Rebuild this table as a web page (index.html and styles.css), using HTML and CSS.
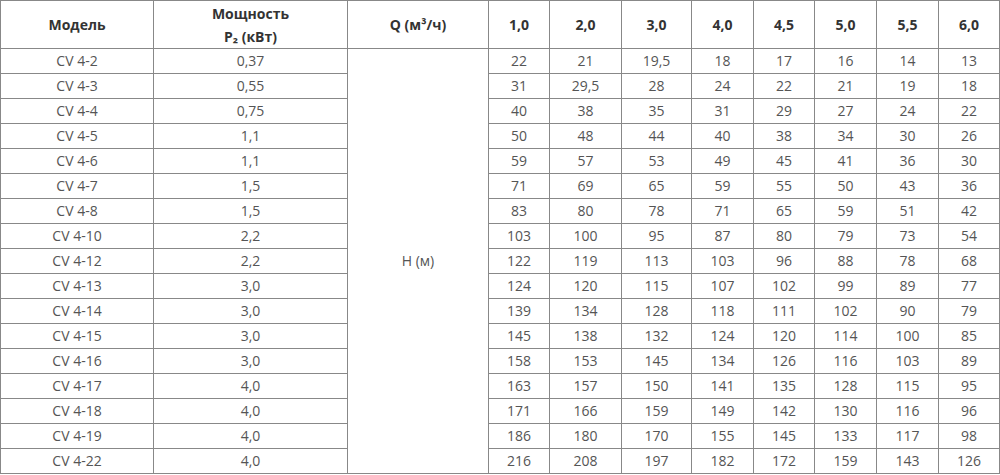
FILE: index.html
```html
<!DOCTYPE html>
<html lang="ru">
<head>
<meta charset="utf-8">
<title>CV 4</title>
<link rel="stylesheet" href="styles.css">
</head>
<body>
<table class="spec">
  <colgroup>
    <col class="w-model"><col class="w-power"><col class="w-q">
    <col class="w-a"><col class="w-b"><col class="w-c"><col class="w-d">
    <col class="w-e"><col class="w-f"><col class="w-g"><col class="w-h">
  </colgroup>
  <thead>
    <tr class="head">
      <th>Модель</th>
      <th>Мощность<br>P₂ (кВт)</th>
      <th>Q (м³/ч)</th>
      <th>1,0</th><th>2,0</th><th>3,0</th><th>4,0</th><th>4,5</th><th>5,0</th><th>5,5</th><th>6,0</th>
    </tr>
  </thead>
  <tbody>
    <tr><td>CV 4-2</td><td>0,37</td><td class="hcell" rowspan="17">H (м)</td><td>22</td><td>21</td><td>19,5</td><td>18</td><td>17</td><td>16</td><td>14</td><td>13</td></tr>
    <tr><td>CV 4-3</td><td>0,55</td><td>31</td><td>29,5</td><td>28</td><td>24</td><td>22</td><td>21</td><td>19</td><td>18</td></tr>
    <tr><td>CV 4-4</td><td>0,75</td><td>40</td><td>38</td><td>35</td><td>31</td><td>29</td><td>27</td><td>24</td><td>22</td></tr>
    <tr><td>CV 4-5</td><td>1,1</td><td>50</td><td>48</td><td>44</td><td>40</td><td>38</td><td>34</td><td>30</td><td>26</td></tr>
    <tr><td>CV 4-6</td><td>1,1</td><td>59</td><td>57</td><td>53</td><td>49</td><td>45</td><td>41</td><td>36</td><td>30</td></tr>
    <tr><td>CV 4-7</td><td>1,5</td><td>71</td><td>69</td><td>65</td><td>59</td><td>55</td><td>50</td><td>43</td><td>36</td></tr>
    <tr><td>CV 4-8</td><td>1,5</td><td>83</td><td>80</td><td>78</td><td>71</td><td>65</td><td>59</td><td>51</td><td>42</td></tr>
    <tr><td>CV 4-10</td><td>2,2</td><td>103</td><td>100</td><td>95</td><td>87</td><td>80</td><td>79</td><td>73</td><td>54</td></tr>
    <tr><td>CV 4-12</td><td>2,2</td><td>122</td><td>119</td><td>113</td><td>103</td><td>96</td><td>88</td><td>78</td><td>68</td></tr>
    <tr><td>CV 4-13</td><td>3,0</td><td>124</td><td>120</td><td>115</td><td>107</td><td>102</td><td>99</td><td>89</td><td>77</td></tr>
    <tr><td>CV 4-14</td><td>3,0</td><td>139</td><td>134</td><td>128</td><td>118</td><td>111</td><td>102</td><td>90</td><td>79</td></tr>
    <tr><td>CV 4-15</td><td>3,0</td><td>145</td><td>138</td><td>132</td><td>124</td><td>120</td><td>114</td><td>100</td><td>85</td></tr>
    <tr><td>CV 4-16</td><td>3,0</td><td>158</td><td>153</td><td>145</td><td>134</td><td>126</td><td>116</td><td>103</td><td>89</td></tr>
    <tr><td>CV 4-17</td><td>4,0</td><td>163</td><td>157</td><td>150</td><td>141</td><td>135</td><td>128</td><td>115</td><td>95</td></tr>
    <tr><td>CV 4-18</td><td>4,0</td><td>171</td><td>166</td><td>159</td><td>149</td><td>142</td><td>130</td><td>116</td><td>96</td></tr>
    <tr><td>CV 4-19</td><td>4,0</td><td>186</td><td>180</td><td>170</td><td>155</td><td>145</td><td>133</td><td>117</td><td>98</td></tr>
    <tr><td>CV 4-22</td><td>4,0</td><td>216</td><td>208</td><td>197</td><td>182</td><td>172</td><td>159</td><td>143</td><td>126</td></tr>
  </tbody>
</table>
</body>
</html>
```
FILE: styles.css
```css
html, body {
  margin: 0;
  padding: 0;
  background: #fff;
}
body {
  font-family: "Open Sans", "Liberation Sans", sans-serif;
  font-size: 14px;
  color: #555;
}
.spec {
  border-collapse: collapse;
  table-layout: fixed;
  width: 999px;
}
.spec th,
.spec td {
  border: 1px solid #888;
  padding: 0;
  text-align: center;
  vertical-align: middle;
}
.spec th {
  font-weight: 700;
  color: #333;
  line-height: 23px;
  height: 47px;
}
.spec td {
  height: 24px;
  line-height: 20px;
}
.w-model { width: 153px; }
.w-power { width: 194px; }
.w-q { width: 141px; }
.w-a { width: 61px; }
.w-b { width: 72px; }
.w-c { width: 70px; }
.w-d { width: 62px; }
.w-e { width: 61px; }
.w-f { width: 62px; }
.w-g { width: 62px; }
.w-h { width: 61px; }
```
